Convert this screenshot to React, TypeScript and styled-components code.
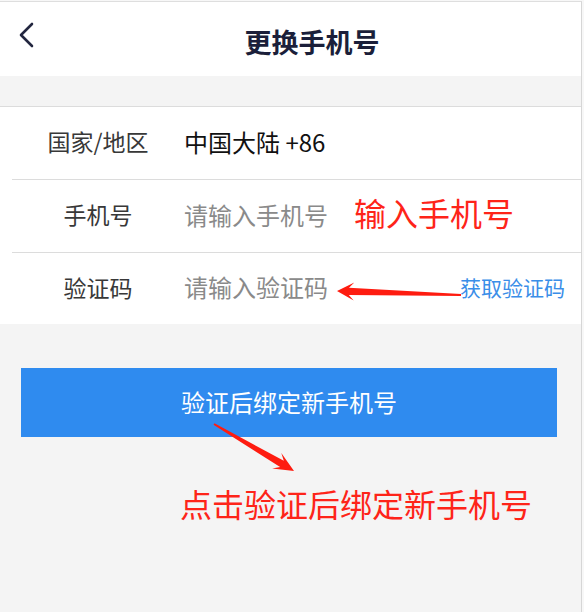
import React from 'react';
import styled, {createGlobalStyle} from 'styled-components';

const GlobalStyle = createGlobalStyle`
  body {
    margin: 0;
    background: #f7f7f7;
    font-family: "Noto Sans CJK SC", "Microsoft YaHei", sans-serif;
  }
`;

type Pt = [number, number];

// tapered annotation arrow, like a screenshot tool draws it
function arrowPoints(tail: Pt, tip: Pt, headLen: number, headHalf: number, neckHalf: number, tailHalf: number) {
    const dx = tip[0] - tail[0];
    const dy = tip[1] - tail[1];
    const len = Math.sqrt(dx * dx + dy * dy);
    const ux = dx / len, uy = dy / len;
    const nx = -uy, ny = ux;
    const base: Pt = [tip[0] - ux * headLen, tip[1] - uy * headLen];
    const neck: Pt = [tip[0] - ux * headLen * 0.7, tip[1] - uy * headLen * 0.7];
    const pts: Pt[] = [
        [tail[0] + nx * tailHalf, tail[1] + ny * tailHalf],
        [neck[0] + nx * neckHalf, neck[1] + ny * neckHalf],
        [base[0] + nx * headHalf, base[1] + ny * headHalf],
        tip,
        [base[0] - nx * headHalf, base[1] - ny * headHalf],
        [neck[0] - nx * neckHalf, neck[1] - ny * neckHalf],
        [tail[0] - nx * tailHalf, tail[1] - ny * tailHalf],
    ];
    return pts.map(p => p[0].toFixed(1) + ',' + p[1].toFixed(1)).join(' ');
}

function App() {
    return (
        <>
            <GlobalStyle/>
            <Frame>
                <Header>
                    <BackBtn>
                        <svg width="16" height="26" viewBox="0 0 16 26">
                            <path d="M14 2 L3 13 L14 24" fill="none" stroke="#23263f" strokeWidth="2.6" strokeLinecap="round" strokeLinejoin="round"/>
                        </svg>
                    </BackBtn>
                    <Title>更换手机号</Title>
                </Header>
                <List>
                    <Row>
                        <Label>国家/地区</Label>
                        <Value>中国大陆 +86</Value>
                    </Row>
                    <Row>
                        <Label>手机号</Label>
                        <Input placeholder="请输入手机号" $width={170}/>
                        <Note>输入手机号</Note>
                    </Row>
                    <Row $last>
                        <Label>验证码</Label>
                        <Input placeholder="请输入验证码"/>
                        <CodeLink>获取验证码</CodeLink>
                    </Row>
                </List>
                <SubmitBtn>验证后绑定新手机号</SubmitBtn>
                <Caption>点击验证后绑定新手机号</Caption>
                <Overlay width="584" height="612" viewBox="0 0 584 612">
                    <polygon points={arrowPoints([461, 295], [337, 291], 17, 9, 3.6, 0.9)} fill="#fe1c10"/>
                    <polygon points={arrowPoints([214, 424], [294, 471], 20, 9, 3.6, 0.9)} fill="#fe1c10"/>
                </Overlay>
            </Frame>
        </>
    );
}

export default App;

const Frame = styled.div`
    position: relative;
    width: 581px;
    height: 610px;
    margin-top: 1px;
    border-top: 1px solid #dedede;
    border-right: 1px solid #d6d6d6;
    background: #f4f4f4;
`;

const Header = styled.div`
    height: 74px;
    background: #fff;
    display: flex;
    align-items: flex-start;
`;

const BackBtn = styled.div`
    width: 43px;
    padding: 20px 0 0 18px;
    box-sizing: border-box;
`;

const Title = styled.div`
    flex: 1;
    text-align: center;
    padding-top: 22px;
    font-size: 27px;
    line-height: 36px;
    font-weight: bold;
    color: #1b1f3a;
`;

const List = styled.div`
    margin-top: 30px;
    background: #fff;
    border-top: 1px solid #dcdcdc;
`;

const Row: any = styled.div<{$last?: boolean}>`
    display: flex;
    align-items: center;
    box-sizing: border-box;
    height: ${p => p.$last ? 71 : 73}px;
    margin-left: 12px;
    padding: 0 16px 4px 0;
    border-bottom: ${p => p.$last ? 'none' : '1px solid #dcdcdc'};
`;

const Label = styled.div`
    width: 172px;
    text-align: center;
    font-size: 23px;
    color: #383838;
`;

const Value = styled.div`
    font-size: 24px;
    color: #111;
`;

const Input: any = styled.input<{$width?: number}>`
    ${p => p.$width ? `width: ${p.$width}px;` : 'flex: 1; min-width: 0;'}
    border: 0;
    outline: none;
    padding: 0;
    background: transparent;
    font-family: inherit;
    font-size: 24px;
    color: #111;
    &::placeholder {
        color: #8a8a8a;
    }
`;

const Note = styled.div`
    font-size: 32px;
    color: #fe2419;
    margin-top: -4px;
`;

const CodeLink = styled.div`
    font-size: 21px;
    color: #3a8ee8;
`;

const SubmitBtn = styled.div`
    margin: 44px 0 0 21px;
    width: 536px;
    height: 69px;
    padding-bottom: 3px;
    box-sizing: border-box;
    background: #2f8bef;
    color: #fff;
    font-size: 24px;
    display: flex;
    align-items: center;
    justify-content: center;
`;

const Caption = styled.div`
    margin: 46px 0 0 180px;
    font-size: 32px;
    line-height: 40px;
    color: #fe2419;
`;

const Overlay = styled.svg`
    position: absolute;
    top: -2px;
    left: 0;
    pointer-events: none;
`;
